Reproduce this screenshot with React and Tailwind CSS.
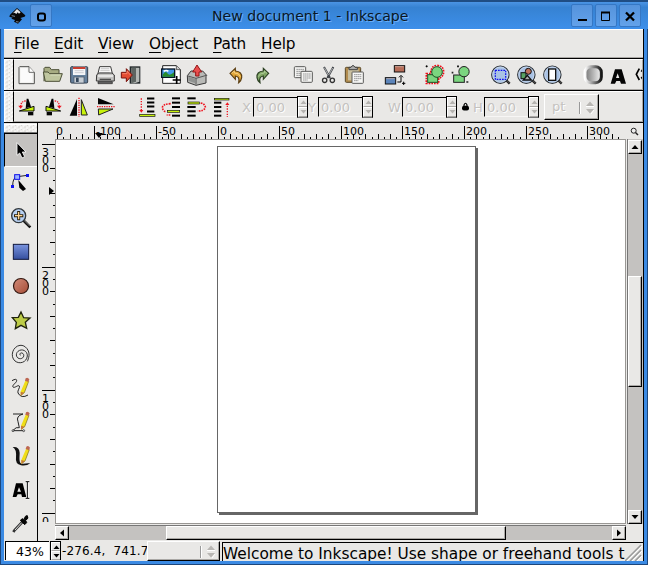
import React from "react";

const sans = "font-['DejaVu_Sans',sans-serif]";
const raised = "border border-t-white border-l-white border-r-black border-b-black shadow-[inset_-1px_-1px_0_#aaa8a5] bg-[#e9e8e6]";

/* Each drawing is made on a 3x grid: x and y name the top-left corner on that grid. */
function Icon({ x, y, w = 26, h = 26, children }) {
  return (
    <svg className="block shrink-0" width={w} height={h} viewBox={`${x} ${y} ${w * 3} ${h * 3}`}>
      {children}
    </svg>
  );
}

const Gap = ({ wide = true }) => <div className={wide ? "w-[14px] shrink-0" : "w-[13px] shrink-0"} />;

function Grip({ className }) {
  return (
    <svg className={`block shrink-0 border-t border-l border-white bg-[#efeeec] ${className}`} width="100%" height="100%">
      <defs>
        <pattern id="grip" width="6" height="4" patternUnits="userSpaceOnUse">
          <path d="M0 1h2M3 3h2" stroke="#fff" />
          <path d="M1 2h2M4 0.5h1" stroke="#d8d6d3" />
        </pattern>
      </defs>
      <rect width="100%" height="100%" fill="url(#grip)" />
    </svg>
  );
}

function TitleButton({ children }) {
  return (
    <div className="flex h-[23px] w-[22px] items-center justify-center rounded-[2px] border border-[#3577c4] bg-linear-to-b from-[#5593dc] to-[#63a2ea]">
      <svg width="20" height="20" viewBox="0 -0.5 20 20">{children}</svg>
    </div>
  );
}

function TitleBar() {
  return (
    <div className="flex h-[29px] shrink-0 items-start border-t-2 border-[#1f4d84] bg-linear-to-b from-[#4b94e4] via-[#3682d2] via-20% to-[#3d8fea] pt-[2px]">
      <div className="ml-[9px] w-[21px] pt-[3px]">
        <svg width="17" height="17" viewBox="26 18 51 51" className="block">
          <path d="M50 21L73 41Q78 46 70 48L60 51L65 55L53 68L41 62L44 57L33 53L37 50L27 47Q28 41 32 38Z" fill="#080808" />
          <path d="M50 24L61 34L56 38L52 34L48 39L43 35L38 37Z" fill="#e6e6e6" />
          <path d="M47 62l8 1M34 44l10 2" stroke="#7c8794" strokeWidth="3" />
        </svg>
      </div>
      <TitleButton>
        <rect x="7" y="7" width="7" height="7" rx="2" fill="none" stroke="#000" strokeWidth="2" />
      </TitleButton>
      <div className={`${sans} ml-[160px] w-[359px] whitespace-nowrap pt-[3px] text-[14.1px] leading-[18px] text-[#0b1624] [text-shadow:1px_1px_0_#6ab0f8]`}>
        New document 1 - Inkscape
      </div>
      <div className="flex gap-[2px]">
        <TitleButton><path d="M6 13.5h9" stroke="#000" strokeWidth="2" /></TitleButton>
        <TitleButton><path d="M5.5 6v8h8V6h-8z" fill="none" stroke="#000" /><path d="M5 6h9" stroke="#000" strokeWidth="2" /></TitleButton>
        <TitleButton><path d="M6 6l8 8M14 6l-8 8" stroke="#000" strokeWidth="2.3" /></TitleButton>
      </div>
    </div>
  );
}

function Menu() {
  const items = [
    ["File", "w-[40px]"], ["Edit", "w-[44px]"], ["View", "w-[51px]"],
    ["Object", "w-[64px]"], ["Path", "w-[48px]"], ["Help", "w-[50px]"],
  ];
  return (
    <div className={`${sans} flex h-[29px] shrink-0 border-t border-b border-t-white border-b-[#aaa8a5] bg-[#e9e8e6] pl-[10px] text-[15.3px] leading-[29px] text-black`}>
      {items.map(([t, w]) => (
        <div key={t} className={`${w} shrink-0 tracking-[-0.1px]`}>
          <span className="underline decoration-1 underline-offset-[3px]">{t[0]}</span>{t.slice(1)}
        </div>
      ))}
    </div>
  );
}

function Lens({ x, children }) {
  return (
    <g>
      <path d={`M${x + 18} 73l10 10`} stroke="#222" strokeWidth="7" />
      <path d={`M${x + 19} 73l8 8`} stroke="#777" strokeWidth="2" />
      <circle cx={x} cy="56" r="26" fill="#a9c2e4" stroke="#2d3237" strokeWidth="3.5" />
      <circle cx={x} cy="56" r="23" fill="none" stroke="#d3e1f4" strokeWidth="2" />
      {children}
    </g>
  );
}

function CommandBar() {
  return (
    <div className="flex h-[33px] shrink-0 border-t border-b border-black">
      <div className="w-[9px] shrink-0"><Grip className="h-full w-full" /></div>
      <div className="flex min-w-0 flex-1 items-start overflow-hidden border-t border-r border-b border-l border-t-white border-r-[#aaa8a5] border-b-[#aaa8a5] border-l-black bg-[#e9e8e6] pt-[2px]">
        <Icon x={42} y={18}>
          <path d="M59 32h28l16 17v34H57V34z" fill="#f2f2f0" stroke="#50504e" strokeWidth="3" />
          <path d="M87 32v17h16" fill="#fff" stroke="#50504e" strokeWidth="2.5" />
          <path d="M62 37h20v12l14 4v25H62z" fill="#fff" opacity=".7" />
        </Icon>
        <Icon x={120} y={18}>
          <path d="M132 76V37l3-3h14l5 7h23v12" fill="#a7ac83" stroke="#4c5038" strokeWidth="3" />
          <path d="M130 48l6 28h43l8-23h-38l-5-5z" fill="#bfc69f" stroke="#4c5038" strokeWidth="3" />
          <path d="M151 57h30" stroke="#e6ebce" strokeWidth="2" />
        </Icon>
        <Icon x={198} y={18}>
          <rect x="212" y="32" width="51" height="49" rx="3" fill="#66819d" stroke="#333e4c" strokeWidth="3" />
          <rect x="219" y="32" width="37" height="25" fill="#f5f6f8" />
          <path d="M219 36h37" stroke="#c83e30" strokeWidth="6" />
          <path d="M224 44h27M224 50h27" stroke="#b6bac0" strokeWidth="2" />
          <rect x="222" y="63" width="30" height="18" fill="#c7ced5" stroke="#435061" strokeWidth="2" />
          <rect x="228" y="65" width="8" height="13" fill="#34465a" />
        </Icon>
        <Icon x={276} y={18}>
          <path d="M293 56l6-24h33l6 24" fill="#fff" stroke="#3a3a3a" strokeWidth="3" />
          <path d="M302 38h26M301 43h28M299 49h30" stroke="#aaa" strokeWidth="2" />
          <path d="M290 57l6-6h40l7 6v18H289z" fill="#c4c4c2" stroke="#3a3a3a" strokeWidth="3" />
          <path d="M294 60h45" stroke="#f7f7f7" strokeWidth="4" />
          <path d="M294 77h43v6h-43z" fill="#666" stroke="#222" strokeWidth="2" />
          <path d="M299 70h34" stroke="#4b4b4b" strokeWidth="4" />
        </Icon>
        <Icon x={354} y={18}>
          <path d="M389 31h32v52h-32z" fill="#22282a" />
          <path d="M394 35h24v42l-14 5h-10z" fill="#b4b8b5" />
          <path d="M394 35h14v42l-14 5z" fill="#5d6461" />
          <path d="M364 49h15V38l18 19-18 20V66h-15z" fill="#e34b32" stroke="#77110b" strokeWidth="3" />
          <path d="M367 53h14v-8l10 12" fill="none" stroke="#ff9b80" strokeWidth="2" />
        </Icon>
        <Gap />
        <Icon x={474} y={18}>
          <path d="M488 29h41l12 12v41h-53z" fill="#fff" stroke="#222" strokeWidth="3" />
          <path d="M529 29v12h12" fill="#ccc" stroke="#222" strokeWidth="2" />
          <rect x="485" y="39" width="39" height="25" fill="#4298e8" stroke="#061525" strokeWidth="4" />
          <path d="M488 56q8-14 14-4t20-3v13h-34z" fill="#278b2b" />
          <path d="M491 46q8-5 14 0" stroke="#fff" strokeWidth="5" fill="none" />
          <path d="M530 60v24M518 72h24" stroke="#000" strokeWidth="5" />
        </Icon>
        <Icon x={552} y={18}>
          <path d="M562 59l11-14h35l12 13-2 4v19l-30 7-25-9z" fill="#b9bab7" stroke="#393939" strokeWidth="3" />
          <path d="M564 60l24 7 31-9M588 67v18" fill="none" stroke="#555" strokeWidth="3" />
          <path d="M565 62l21 7v13l-21-8z" fill="#8f9290" />
          <path d="M587 60V48h-9l13-21 14 21h-8v12z" fill="#e94e4d" stroke="#941616" strokeWidth="3" />
        </Icon>
        <Gap />
        <svg className="block shrink-0" width="26" height="26" viewBox="24 18 78 78">
          <path d="M42 52L58 37v8q21 2 19 20-1 9-9 15 4-19-10-20v10z" fill="#e0a638" stroke="#5b3f14" strokeWidth="3.5" />
          <path d="M47 52l8-7v6q15 0 18 11" fill="none" stroke="#ffe2a0" strokeWidth="2" />
        </svg>
        <svg className="block shrink-0" width="26" height="26" viewBox="102 18 78 78">
          <path d="M158 52L142 37v8q-21 2-19 20 1 9 9 15-4-19 10-20v10z" fill="#7fa563" stroke="#2c4023" strokeWidth="3.5" />
          <path d="M153 52l-8-7v6q-15 0-18 11" fill="none" stroke="#c3dcad" strokeWidth="2" />
        </svg>
        <Gap />
        <Icon x={222} y={18}>
          {[[235, 32], [255, 46]].map(([a, b]) => (
            <g key={a}>
              <rect x={a} y={b} width="34" height="33" rx="3" fill="#f4f4f2" stroke="#5a5a58" strokeWidth="3" />
              <path d={`M${a + 6} ${b + 8}h23M${a + 6} ${b + 14}h23M${a + 6} ${b + 20}h23M${a + 6} ${b + 26}h14`} stroke="#999" strokeWidth="3" strokeDasharray="5 1" />
            </g>
          ))}
        </Icon>
        <Icon x={300} y={18}>
          <path d="M324 33l18 33M352 33l-18 33" stroke="#41454a" strokeWidth="6" />
          <path d="M325 35l12 22M350 36l-11 20" stroke="#e8e8e8" strokeWidth="2" />
          <circle cx="326" cy="73" r="6.5" fill="none" stroke="#333" strokeWidth="4" />
          <circle cx="349" cy="73" r="6.5" fill="none" stroke="#333" strokeWidth="4" />
        </Icon>
        <Icon x={378} y={18}>
          <rect x="388" y="34" width="46" height="45" rx="3" fill="#b28d50" stroke="#574728" strokeWidth="3" />
          <path d="M396 40h32v33h-32z" fill="#c9bf9f" />
          <path d="M399 41v-7h6q6-11 12 0h7v7z" fill="#aaa" stroke="#444" strokeWidth="3" />
          <rect x="408" y="48" width="34" height="34" rx="2" fill="#f7f7f5" stroke="#5a5a58" strokeWidth="3" />
          <path d="M414 56h22M414 62h22M414 68h22M414 74h13" stroke="#999" strokeWidth="3" strokeDasharray="5 1" />
        </Icon>
        <Gap />
        <Icon x={498} y={18}>
          <rect x="535" y="29" width="31" height="19" fill="#b76d58" stroke="#111" strokeWidth="3" />
          <rect x="508" y="65" width="31" height="19" fill="#5c85ba" stroke="#111" strokeWidth="3" />
          <path d="M537 32h26M511 68h25" stroke="#e0bfb5" strokeWidth="2" />
          <path d="M544 78h11V61M549 64l6-6 6 6" fill="none" stroke="#000" strokeWidth="3" />
          <path d="M563 77v10M558 82h10" stroke="#000" strokeWidth="3" />
        </Icon>
        <Gap wide={false} />
        <Icon x={-33} y={18}>
          <path d="M-17 53h13q0-23 19-25 20 2 20 20-1 15-15 19v15h-37z" fill="none" stroke="#ef0d18" strokeWidth="5" strokeDasharray="5 3" />
          <rect x="-13" y="56" width="30" height="23" fill="#7bd57f" stroke="#1d4f22" strokeWidth="3" />
          <circle cx="15" cy="48" r="16" fill="#7bd57f" stroke="#1d4f22" strokeWidth="3" />
          <path d="M-19 31h6M-16 28v6" stroke="#000" strokeWidth="3" />
        </Icon>
        <Icon x={45} y={18} w={27}>
          <rect x="65" y="57" width="32" height="22" fill="#7bd57f" stroke="#222" strokeWidth="3" />
          <circle cx="96" cy="47" r="15.5" fill="#7bd57f" stroke="#222" strokeWidth="3" />
          <path d="M59 50h5M75 31h6M103 78h6" stroke="#222" strokeWidth="5" />
        </Icon>
        <Gap />
        <Icon x={168} y={18}>
          <Lens x={205}><rect x="190" y="43" width="31" height="27" fill="none" stroke="#1010ef" strokeWidth="3.5" strokeDasharray="5 3" /></Lens>
        </Icon>
        <Icon x={246} y={18}>
          <Lens x={283}>
            <rect x="267" y="50" width="15" height="18" fill="#58a363" stroke="#111" strokeWidth="3" />
            <circle cx="289" cy="46" r="9" fill="#bf725c" stroke="#111" strokeWidth="3" />
            <path d="M286 58l12 14h-24z" fill="#aaa" stroke="#111" strokeWidth="4" />
          </Lens>
        </Icon>
        <Icon x={324} y={18}>
          <Lens x={361}><rect x="350" y="39" width="21" height="34" fill="#fff" stroke="#111" strokeWidth="4" /></Lens>
        </Icon>
        <div className="w-[15px] shrink-0" />
        <Icon x={447} y={18}>
          <defs>
            <linearGradient id="stroke-ring"><stop stopColor="#fff" /><stop offset=".5" stopColor="#8a8a8a" /><stop offset="1" stopColor="#161616" /></linearGradient>
            <linearGradient id="fill-ring"><stop stopColor="#777" /><stop offset="1" stopColor="#f4f4f4" /></linearGradient>
          </defs>
          <rect x="459" y="32" width="49" height="48" rx="17" fill="url(#fill-ring)" stroke="url(#stroke-ring)" strokeWidth="9" />
        </Icon>
        <Icon x={525} y={18}>
          <path d="M549 40h20l13 43h-15l-3-8h-11l-4 8h-13zM557 52l-5 14h10z" fill="#050505" fillRule="evenodd" />
        </Icon>
        <Icon x={603} y={18} w={12}>
          <path d="M622 38l-9 17 9 17M634 38l-6 9M634 72l-6-9" fill="none" stroke="#000" strokeWidth="5" />
        </Icon>
      </div>
    </div>
  );
}

const LABEL = "text-[#c4c2bf] [text-shadow:1px_1px_0_#fff]";

function Spin({ label, width, className = "" }) {
  return (
    <div className={`flex shrink-0 items-center ${className}`}>
      <div className={`${sans} ${LABEL} ${width} h-[20px] shrink-0 text-[13px] leading-[21px]`}>{label}</div>
      <div className={`${sans} ${LABEL} h-[20px] w-[44px] shrink-0 border-t border-l border-b border-t-black border-l-black border-b-[#f7f6f5] pl-[2px] text-[13px] leading-[19px]`}>0.00</div>
      <div className="flex h-[22px] w-[11px] shrink-0 flex-col border border-black border-b-[#777]">
        <SpinHalf up /><SpinHalf />
      </div>
    </div>
  );
}

function SpinHalf({ up, dark }) {
  return (
    <div className="flex flex-1 items-center justify-center border-t border-l border-b border-t-white border-l-white border-b-[#aaa8a5]">
      <svg width="7" height="4" viewBox="0 0 7 4"><path d={up ? "M0.5 4L3.5 0.5L6.5 4z" : "M0.5 0h6L3.5 3.5z"} fill={dark ? "#000" : "#b5b3b0"} /></svg>
    </div>
  );
}

function UpDown() {
  return (
    <svg width="16" height="17" viewBox="0 0 16 17" className="block">
      <path d="M.5 3v12" stroke="#999" /><path d="M1.5 3v12" stroke="#fff" />
      <path d="M7 7L11 2.5l4 4.5zM7 10h8l-4 4.5z" fill="#b8b6b3" />
      <path d="M7 7.5h8M12 15l3-4" stroke="#fff" />
    </svg>
  );
}

function ToolControls() {
  return (
    <div className="flex h-[32px] shrink-0 border-b border-black">
      <div className="w-[9px] shrink-0"><Grip className="h-full w-full" /></div>
      <div className="flex min-w-0 flex-1 items-start overflow-hidden border-t border-r border-b border-l border-t-white border-r-[#aaa8a5] border-b-[#aaa8a5] border-l-black bg-[#e9e8e6] pt-[2px]">
        <Icon x={42} y={114}>
          <path d="M80 128h5l8 24-16 5z" fill="#050505" />
          <path d="M84 168h16v10H84z" fill="#050505" />
          <path d="M58 165l44-14v14z" fill="#c7f20b" stroke="#0b0b0b" strokeWidth="3" />
          <path d="M77 135q-13 0-15 15" fill="none" stroke="#ec1520" strokeWidth="4" strokeDasharray="4 3" />
          <path d="M55 149h14l-7 9z" fill="#ec1520" />
        </Icon>
        <Icon x={120} y={114}>
          <path d="M160 128h-5l-8 24 16 5z" fill="#050505" />
          <path d="M140 168h16v10h-16z" fill="#050505" />
          <path d="M182 165l-44-14v14z" fill="#c7f20b" stroke="#0b0b0b" strokeWidth="3" />
          <path d="M164 135q13 0 14 15" fill="none" stroke="#ec1520" strokeWidth="4" strokeDasharray="4 3" />
          <path d="M171 149h14l-7 9z" fill="#ec1520" />
        </Icon>
        <Icon x={198} y={114}>
          <path d="M231 129v50h-22z" fill="#050505" />
          <path d="M244 131v46h18z" fill="#c7f20b" stroke="#222" strokeWidth="3" />
          <path d="M237 125v57" stroke="#ee1520" strokeWidth="4" strokeDasharray="4 3" />
        </Icon>
        <Icon x={276} y={114}>
          <path d="M294 126v19h47z" fill="#050505" />
          <path d="M295 159h44l-43 18z" fill="#c7f20b" stroke="#222" strokeWidth="3" />
          <path d="M291 152h55" stroke="#ee1520" strokeWidth="4" strokeDasharray="4 3" />
        </Icon>
        <div className="w-[16px] shrink-0" />
        <Icon x={402} y={114} w={25}>
          {[127.5, 139.5, 151.5, 166.5].map((v) => <path key={v} d={`M441 ${v}h22`} stroke="#000" strokeWidth="6" />)}
          <rect x="419" y="175" width="46" height="6" fill="#c7f20b" stroke="#111" strokeWidth="2" />
          <path d="M424 127v37" stroke="#ee1520" strokeWidth="4" strokeDasharray="4 4" /><path d="M418 162h12l-6 8z" fill="#ee1520" />
        </Icon>
        <Icon x={477} y={114} w={25}>
          {[127, 140, 153, 179].map((v) => <path key={v} d={`M516 ${v}h24`} stroke="#000" strokeWidth="6" />)}
          <rect x="502" y="163" width="37" height="6" fill="#c7f20b" stroke="#111" strokeWidth="2" />
          <path d="M512 143q-24 1-25 12 2 10 10 12M511 177h-11" fill="none" stroke="#ee1520" strokeWidth="5" strokeDasharray="5 3" />
        </Icon>
        <Icon x={552} y={114} w={24}>
          {[127, 153, 166, 179].map((v) => <path key={v} d={`M562 ${v}h25`} stroke="#000" strokeWidth="6" />)}
          <rect x="564" y="138" width="34" height="6" fill="#c7f20b" stroke="#111" strokeWidth="2" />
          <path d="M602 141q14 3 14 14-5 11-24 10" fill="none" stroke="#ee1520" strokeWidth="5" strokeDasharray="5 3" />
        </Icon>
        <Icon x={624} y={114}>
          {[140, 153, 166, 179].map((v) => <path key={v} d={`M642 ${v}h22`} stroke="#000" strokeWidth="6" />)}
          <rect x="643" y="127" width="44" height="5" fill="#c7f20b" stroke="#111" strokeWidth="2" />
          <path d="M682 149v34" stroke="#ee1520" strokeWidth="4" strokeDasharray="4 4" /><path d="M676 147h12l-6-8z" fill="#ee1520" />
        </Icon>
        <Spin label="X" width="w-[11px]" className="ml-[8px] pt-[2px]" />
        <Spin label="Y" width="w-[10px]" className="pt-[2px]" />
        <Spin label="W" width="w-[14px]" className="ml-[15px] pt-[2px]" />
        <svg className="ml-[5px] mt-[8px] block shrink-0" width="7" height="10" viewBox="0 0 7 10">
          <path d="M2 5V3q1.5-3.5 3 0v2" fill="none" stroke="#000" strokeWidth="1.2" /><rect x="0" y="3.7" width="7" height="4.8" rx="2" fill="#000" />
        </svg>
        <Spin label="H" width="w-[11px]" className="ml-[4px] pt-[2px]" />
        <div className={`ml-[5px] flex h-[26px] w-[55px] shrink-0 items-center justify-between pl-[7px] pr-[3px] ${raised}`}>
          <span className={`${sans} ${LABEL} text-[13px]`}>pt</span><UpDown />
        </div>
      </div>
    </div>
  );
}

const RULER_LABELS = [["-100", -100], ["-50", -50], ["0", 0], ["50", 50], ["100", 100], ["150", 150], ["200", 200], ["250", 250], ["300", 300]];

function HorizontalRuler() {
  const ticks = [];
  for (let u = -130; u <= 325; u += 5) {
    const x = Math.floor(218 - 38 + u * 1.2333) + 0.5;
    const top = u % 50 === 0 ? 3 : u % 10 === 0 ? 11 : 14;
    ticks.push(<path key={u} d={`M${x} ${top}V16`} stroke="#000" />);
  }
  return (
    <svg className={`${sans} block shrink-0`} width="588" height="16" viewBox="0 0 588 16">
      <text x="18" y="12" fontSize="11">0</text>
      {ticks}
      {RULER_LABELS.map(([t, u]) => <text key={t} x={Math.floor(180 + u * 1.2333) + 2} y="12" fontSize="11">{t}</text>)}
      <path d="M57 10h8l-4 5z" fill="#000" />
    </svg>
  );
}

function VerticalRuler() {
  const ticks = [];
  for (let k = 0; k <= 30; k += 1) {
    const y = Math.floor(144 - 139 + k * 12.31) + 0.5;
    const left = k % 10 === 0 ? 4 : k % 2 === 0 ? 12 : 15;
    ticks.push(<path key={k} d={`M${left} ${y}H17`} stroke="#000" />);
  }
  return (
    <svg className={`${sans} block shrink-0`} width="17" height="385" viewBox="0 0 17 385">
      {ticks}
      {["300", "200", "100", "0"].map((t, i) => [...t].map((c, j) => (
        <text key={t + j} x="4" y={17 + Math.floor(i * 123.1) + j * 8} fontSize="11">{c}</text>
      )))}
      <rect y="383" width="17" height="2" fill="#e9e8e6" />
      <path d="M11 48v8l5-4z" fill="#000" />
    </svg>
  );
}

function Pencil({ x, y }) {
  return (
    <g transform={`translate(${x} ${y})`}>
      <path d="M17 4l9 4-13 34-11 9v-12z" fill="#f0de18" />
      <path d="M26 8L13 42 3 50" fill="none" stroke="#7a6a16" strokeWidth="2" />
      <path d="M17-1q6-5 11 3l-3 8-10-4z" fill="#bd6752" />
      <path d="M2 39l11 3-11 9z" fill="#c57a3c" />
    </g>
  );
}

function Toolbox() {
  return (
    <div className="flex w-[34px] shrink-0 flex-col border-r border-black bg-[#e9e8e6]">
      <div className="h-[10px] shrink-0 border-b border-[#777] pt-[1px]"><Grip className="h-full w-full" /></div>
      <div className="flex h-[34px] shrink-0 items-start border-t border-l border-b border-t-black border-l-black border-b-white bg-[#c4c2c0]">
        <Icon x={15} y={42} w={31} h={32}><path d="M51 68v38l8-7 7 15 8-4-7-14h11z" fill="#000" stroke="#fff" strokeWidth="2.5" /></Icon>
      </div>
      <div className="h-[372px] overflow-hidden">
        <Icon x={12} y={141} w={32} h={34}>
          <path d="M38 199q0-28 14-29l30-4" fill="none" stroke="#222" strokeWidth="3" />
          <path d="M55 180l23 27-9 6-11-10z" fill="#000" />
          <path d="M33 195h9v9h-9zM78 162h9v9h-9z" fill="#0e14f0" /><rect x="44" y="164" width="15" height="14" fill="#9cb5ff" stroke="#1010e8" strokeWidth="3" />
        </Icon>
        <Icon x={12} y={243} w={32} h={34}>
          <path d="M69 300l22 22" stroke="#111" strokeWidth="8" /><path d="M71 300l18 18" stroke="#888" strokeWidth="3" />
          <circle cx="56" cy="287" r="21" fill="#b7d0f2" stroke="#30363b" strokeWidth="4" />
          <path d="M56 273v28M42 287h28" stroke="#2c210c" strokeWidth="9" /><path d="M56 276v22M45 287h22" stroke="#ffd591" strokeWidth="4" />
        </Icon>
        <Icon x={12} y={345} w={32} h={34}>
          <defs><linearGradient id="blue" x2="0" y2="1"><stop stopColor="#7a94df" /><stop offset="1" stopColor="#354f9f" /></linearGradient></defs>
          <rect x="40" y="373" width="46" height="45" fill="url(#blue)" stroke="#10173d" strokeWidth="3" />
        </Icon>
        <Icon x={12} y={12} w={32} h={34}>
          <defs><linearGradient id="red" x2="1" y2="1"><stop stopColor="#d38c79" /><stop offset="1" stopColor="#a54c36" /></linearGradient></defs>
          <circle cx="63" cy="63" r="22.5" fill="url(#red)" stroke="#321710" strokeWidth="3.5" />
        </Icon>
        <Icon x={12} y={114} w={32} h={34}><path d="M63 141l8 17 19 1-14 13 4 18-17-9-17 10 3-19-12-14 18-1z" fill="#bdcc47" stroke="#20230c" strokeWidth="4" /></Icon>
        <Icon x={12} y={216} w={32} h={34}>
          <path d="M62 271c-5-2-1-9 4-7 9 3 6 16-4 17-13 1-17-14-8-22 12-10 29-1 28 14-2 19-23 26-37 15-16-14-7-44 15-47 17-2 29 17 27 31-1 7-3 13-5 17" fill="none" stroke="#333" strokeWidth="3" />
        </Icon>
        <Icon x={12} y={318} w={32} h={34}>
          <path d="M36 347q14-8 14 0c0 6-15 14-11 19s16-8 19-3-7 14-4 21q10 18 30 6" fill="none" stroke="#222" strokeWidth="3" />
          <Pencil x={60} y={341} />
        </Icon>
        <Icon x={12} y={-15} w={32} h={34}>
          <path d="M39 12h30Q47 18 54 35l4 18Q49 49 38 62h31" fill="none" stroke="#222" strokeWidth="3" />
          <circle cx="39" cy="62" r="3" fill="#ddd" stroke="#222" strokeWidth="2" /><circle cx="71" cy="62" r="3" fill="#ddd" stroke="#222" strokeWidth="2" />
          <Pencil x={61} y={8} />
        </Icon>
        <Icon x={12} y={87} w={32} h={34}>
          <path d="M38 111q20-2 21 17c0 14-4 35 10 33q12-2 22-1-12 9-28 6-18-4-15-24 2-25-10-31z" fill="#111" />
          <Pencil x={62} y={111} />
        </Icon>
        <Icon x={12} y={189} w={32} h={34}>
          <path d="M48 220h20l11 41H66l-2-8H53l-4 8H38zM57 232l-5 13h11z" fill="#000" fillRule="evenodd" />
          <path d="M77 215h11M82 216v48M77 265h11" stroke="#fff" strokeWidth="7" /><path d="M77 215h11M82 216v48M77 265h11" stroke="#000" strokeWidth="3" />
        </Icon>
        <Icon x={12} y={291} w={32} h={33}>
          <path d="M67 336l-23 24-4 6" stroke="#333" strokeWidth="8" fill="none" /><path d="M65 338l-20 22" stroke="#ddd" strokeWidth="3" />
          <path d="M61 331l6-5 6 3q1-13 9-12 6 8-5 14l3 7-6 6z" fill="#050505" stroke="#050505" strokeWidth="3" />
        </Icon>
      </div>
    </div>
  );
}

function ScrollButton({ d, className }) {
  return (
    <div className={`flex shrink-0 items-center justify-center ${raised} ${className}`}>
      <svg width="8" height="8" viewBox="0 0 8 8"><path d={d} fill="#000" /></svg>
    </div>
  );
}

function Workspace() {
  return (
    <div className="flex min-w-0 flex-1 flex-col bg-[#e9e8e6]">
      <div className="flex h-[16px] shrink-0">
        <div className="w-[588px]"><HorizontalRuler /></div>
        <svg className="ml-[4px] mt-[4px] block" width="9" height="9" viewBox="0 0 9 9"><circle cx="3.7" cy="3.7" r="2.5" fill="#eee" stroke="#222" /><path d="M5.5 5.5l2.5 2.5" stroke="#222" strokeWidth="1.5" /></svg>
      </div>
      <div className="flex h-[385px] shrink-0">
        <VerticalRuler />
        <div className="h-[385px] w-[571px] shrink-0 border border-[#999794] bg-white pt-[6px] pl-[161px]">
          <div className="h-[367px] w-[259px] border border-[#666] bg-white shadow-[2px_2px_0_#666]" />
        </div>
        <div className="ml-[1px] flex w-[16px] shrink-0 flex-col border-l border-[#777] bg-[#c4c2c0] pt-px">
          <ScrollButton d="M0.5 6h7L4 2z" className="h-[14px] w-[14px]" />
          <div className={`mt-[122px] h-[111px] w-[14px] shrink-0 ${raised}`} />
          <ScrollButton d="M0.5 2h7L4 6z" className="mt-auto h-[14px] w-[14px]" />
        </div>
      </div>
      <div className="flex h-[17px] shrink-0 pl-[17px] pt-px">
        <div className="flex h-[15px] w-[571px] border-t border-[#777] bg-[#c4c2c0]">
          <ScrollButton d="M6 0.5v7L2 4z" className="h-[14px] w-[14px]" />
          <div className={`ml-[97px] h-[14px] w-[340px] ${raised}`} />
          <ScrollButton d="M2 0.5v7L6 4z" className="ml-auto h-[14px] w-[14px]" />
        </div>
      </div>
    </div>
  );
}

function StatusBar() {
  return (
    <div className={`${sans} flex h-[20px] shrink-0 overflow-hidden bg-[#e9e8e6] text-black`}>
      <div className="ml-px h-[19px] w-[44px] shrink-0 border-t border-l border-black bg-white pl-[10px] text-[12.5px] leading-[20px]">43%</div>
      <div className="ml-px flex h-[19px] w-[11px] shrink-0 flex-col border-t border-r border-l border-black bg-[#e9e8e6]"><SpinHalf up dark /><SpinHalf dark /></div>
      <div className="w-[86px] shrink-0 overflow-hidden whitespace-pre pl-[1px] text-[12px] leading-[20px] tracking-[0.15px]">-276.4,  741.7</div>
      <div className={`flex h-[20px] w-[73px] shrink-0 items-center justify-end pr-[3px] ${raised}`}><UpDown /></div>
      <div className="ml-[2px] mt-px h-[19px] w-[422px] overflow-hidden border-t border-l border-black">
        <div className="flex">
          <div className="w-[402px] shrink-0 overflow-hidden whitespace-nowrap text-[15.35px] leading-[22px]">Welcome to Inkscape! Use shape or freehand tools t</div>
          <svg className="block shrink-0" width="17" height="18" viewBox="0 0 17 18">
            <path d="M0 18L16 2M5 18L16 7M10 18l6-6" stroke="#999" strokeWidth="1.5" /><path d="M2 18L17 3M7 18L17 8M12 18l5-5" stroke="#fff" />
          </svg>
        </div>
      </div>
    </div>
  );
}

export default function App() {
  return (
    <div className="flex h-[565px] w-[648px] flex-col overflow-hidden bg-[#3b8ae3]">
      <TitleBar />
      <div className="flex h-[536px] flex-col border-l border-r border-b border-[#1d477c]">
        <div className="ml-[3px] flex h-[532px] w-[640px] flex-col border-r border-black bg-[#e9e8e6]">
          <Menu />
          <CommandBar />
          <ToolControls />
          <div className="flex h-[418px] shrink-0 overflow-hidden">
            <Toolbox />
            <Workspace />
          </div>
          <StatusBar />
        </div>
      </div>
    </div>
  );
}
